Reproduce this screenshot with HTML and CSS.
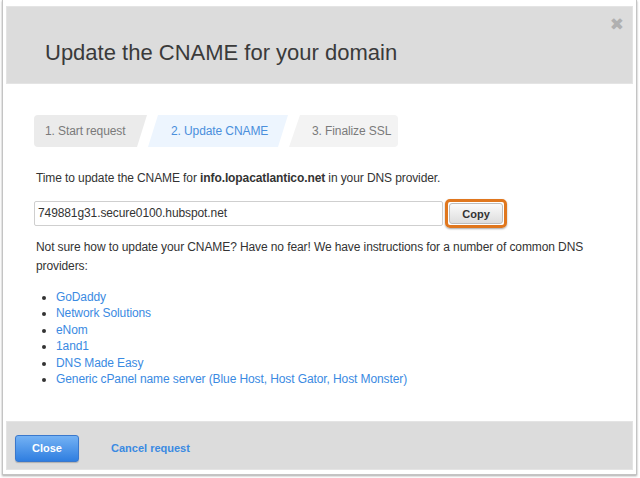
FILE: index.html
```html
<!DOCTYPE html>
<html>
<head>
<meta charset="utf-8">
<link rel="stylesheet" href="styles.css">
</head>
<body>
<div class="frame">
  <div class="modal">
    <div class="header">
      <h1 class="title">Update the CNAME for your domain</h1>
      <span class="close-x">&#x2716;</span>
    </div>
    <div class="content">
      <div class="steps">
        <div class="step step-1">1. Start request</div>
        <div class="step step-2">2. Update CNAME</div>
        <div class="step step-3">3. Finalize SSL</div>
      </div>
      <p class="lead">Time to update the CNAME for <b>info.lopacatlantico.net</b> in your DNS provider.</p>
      <div class="copy-row">
        <div class="field">749881g31.secure0100.hubspot.net</div>
        <div class="copy-wrap"><button class="copy-btn">Copy</button></div>
      </div>
      <p class="help">Not sure how to update your CNAME? Have no fear! We have instructions for a number of common DNS providers:</p>
      <ul class="providers">
        <li><a>GoDaddy</a></li>
        <li><a>Network Solutions</a></li>
        <li><a>eNom</a></li>
        <li><a>1and1</a></li>
        <li><a>DNS Made Easy</a></li>
        <li><a>Generic cPanel name server (Blue Host, Host Gator, Host Monster)</a></li>
      </ul>
    </div>
    <div class="footer">
      <button class="btn-close">Close</button>
      <a class="cancel">Cancel request</a>
    </div>
  </div>
</div>
</body>
</html>
```
FILE: styles.css
```css
html, body {
  margin: 0;
  padding: 0;
  background: #fff;
}
body {
  font-family: "Liberation Sans", Arial, sans-serif;
  color: #333;
  width: 640px;
  height: 478px;
  overflow: hidden;
}
.frame {
  margin: 0 3px 0 2px;
  height: 475px;
  box-sizing: border-box;
  border: 1px solid #c4c4c4;
  border-top: none;
  box-shadow: 0 1px 2px rgba(0,0,0,0.35);
  padding: 6px 3px 4px 3px;
  background: #fff;
}
.modal {
  height: 100%;
  display: flex;
  flex-direction: column;
}
.header {
  position: relative;
  background: #dcdcdc;
  height: 78px;
  box-sizing: border-box;
  padding: 33px 0 0 38px;
  border: 1px solid #e4e4e4;
}
.title {
  margin: 0;
  font-weight: normal;
  font-size: 22px;
  line-height: 26px;
  color: #3a3a3a;
}
.close-x {
  position: absolute;
  right: 8px;
  top: 9px;
  font-size: 17px;
  line-height: 17px;
  color: #b0b0b0;
  font-family: "DejaVu Sans", sans-serif;
}
.content {
  flex: 1;
  padding: 31px 28px 0 28px;
}
.steps {
  display: flex;
  gap: 1px;
  height: 32px;
}
.step {
  font-size: 12px;
  letter-spacing: -0.1px;
  line-height: 32px;
  color: #7a7a7a;
  box-sizing: border-box;
  white-space: nowrap;
}
.step-1 {
  width: 113px;
  padding-left: 11px;
  background: #ebebeb;
  border-radius: 4px 0 0 4px;
  clip-path: polygon(0 0, 100% 0, calc(100% - 10px) 100%, 0 100%);
}
.step-2 {
  width: 140px;
  padding-left: 23px;
  background: #edf5fe;
  color: #4a8fdc;
  clip-path: polygon(10px 0, 100% 0, calc(100% - 10px) 100%, 0 100%);
}
.step-3 {
  width: 109px;
  padding-left: 23px;
  background: #f3f3f3;
  border-radius: 0 4px 4px 0;
  clip-path: polygon(11px 0, 100% 0, 100% 100%, 0 100%);
}
.lead {
  margin: 22px 0 0 2px;
  font-size: 12px;
  letter-spacing: -0.1px;
  line-height: 18px;
}
.copy-row {
  display: flex;
  align-items: center;
  gap: 2px;
  margin-top: 12px;
  height: 29px;
}
.field {
  width: 409px;
  height: 25px;
  box-sizing: border-box;
  border: 1px solid #cfcfcf;
  border-radius: 2px;
  font-size: 12px;
  letter-spacing: -0.1px;
  line-height: 23px;
  padding-left: 3px;
  color: #333;
}
.copy-wrap {
  border: 3px solid #e0771e;
  border-radius: 5px;
  padding: 1px;
  box-shadow: 0 1px 2px rgba(0,0,0,0.35);
  display: flex;
}
.copy-btn {
  width: 54px;
  height: 21px;
  border: 1px solid #bdbdbd;
  border-radius: 3px;
  background: linear-gradient(#fafafa, #dedede);
  font-family: "Liberation Sans", Arial, sans-serif;
  font-weight: bold;
  font-size: 11px;
  color: #333;
  padding: 0;
}
.help {
  margin: 10px 0 0 2px;
  font-size: 12px;
  letter-spacing: -0.1px;
  line-height: 19px;
  width: 560px;
}
.providers {
  margin: 13px 0 0 0;
  padding: 0 0 0 22px;
  font-size: 12px;
  letter-spacing: -0.1px;
  line-height: 16.4px;
  color: #333;
}
.providers a {
  color: #3a8ae2;
}
.footer {
  background: #dcdcdc;
  height: 49px;
  display: flex;
  align-items: center;
  padding: 5px 0 0 8px;
  border: 1px solid #e4e4e4;
  box-sizing: border-box;
}
.btn-close {
  width: 64px;
  height: 27px;
  border: 1px solid #3a78cc;
  border-radius: 3px;
  background: linear-gradient(#74b2f4, #2f7ee0);
  color: #fff;
  font-family: "Liberation Sans", Arial, sans-serif;
  font-weight: bold;
  font-size: 11px;
  box-shadow: 0 1px 1px rgba(0,0,0,0.2);
  padding: 0;
}
.cancel {
  margin-left: 32px;
  font-size: 11px;
  font-weight: bold;
  color: #3a8ae2;
}
```
